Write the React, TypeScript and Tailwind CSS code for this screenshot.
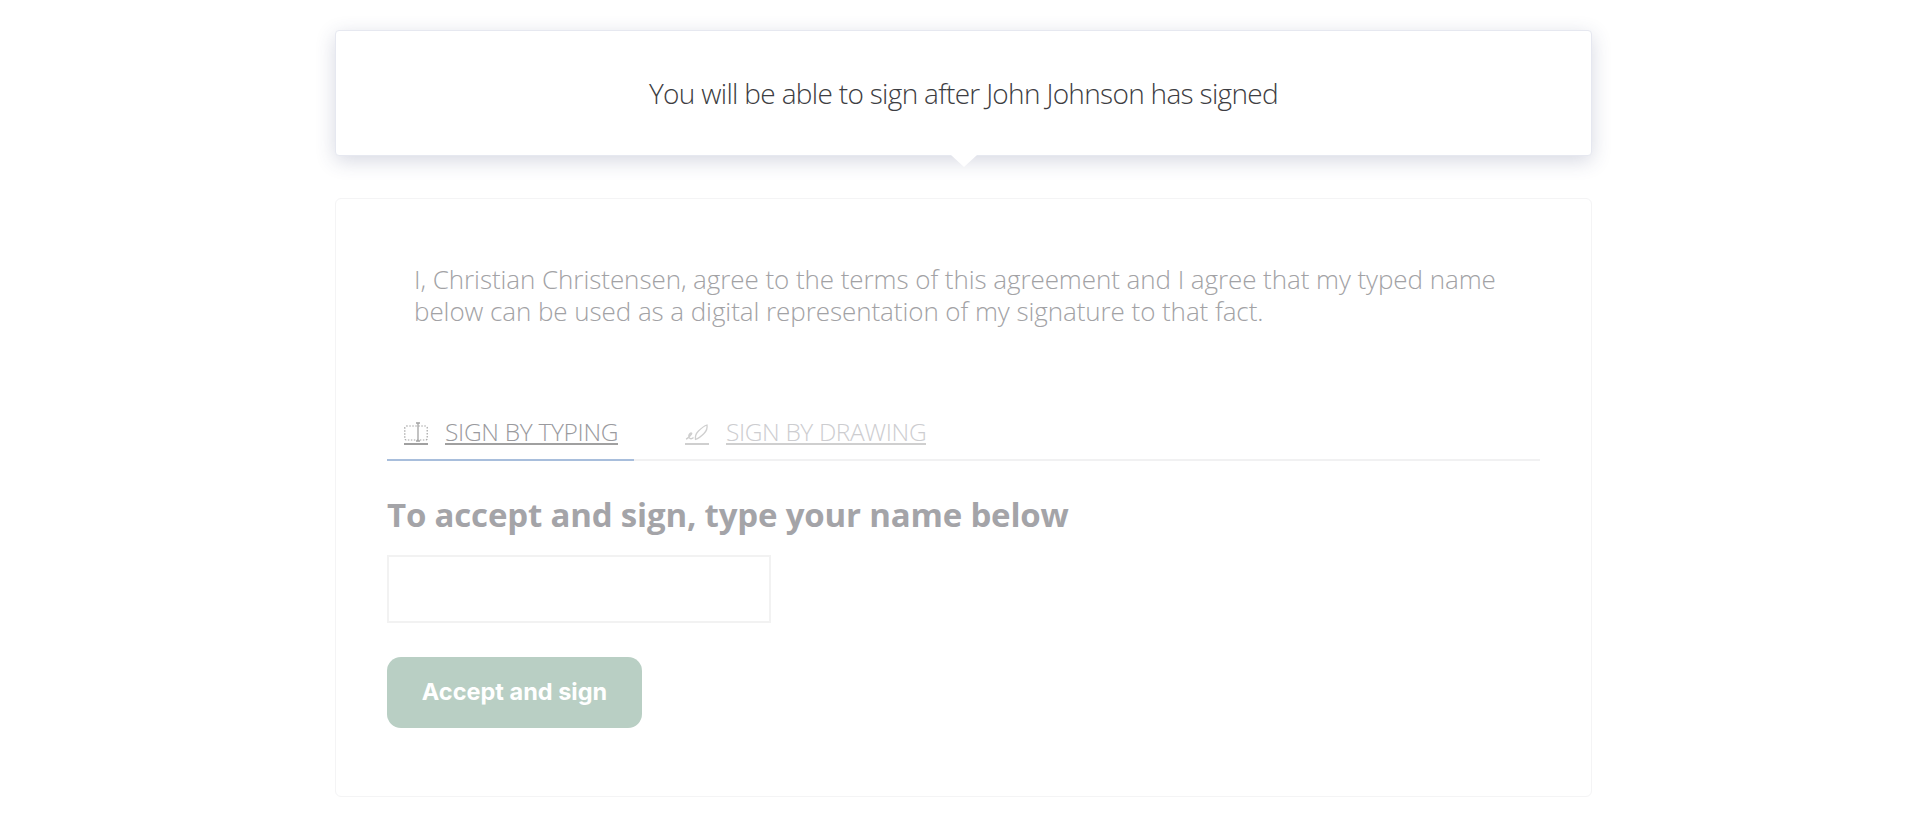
import React from "react";

function TypeIcon() {
  return (
    <svg width="24" height="22" viewBox="0 0 24 22" fill="none" stroke="#a3a3a3" className="block">
      <rect x="0.8" y="5" width="22.400" height="14" rx="1.5" strokeWidth="1.2" strokeDasharray="1.5 1.5" />
      <path d="M14 2.500v17M12 2h4M12 20h4" strokeWidth="1.3" />
    </svg>
  );
}

function DrawIcon() {
  return (
    <svg width="24" height="22" viewBox="0 0 24 22" fill="none" stroke="#cfcfcf" strokeWidth="1.3" className="block">
      <path d="M1 18c2-.5 4-3 5.500-5 .8-1-.5-1.500-1.500-.5s-1.500 3-.5 4.500c1 1 2.500 1 4-.5" />
      <path d="M10.500 18.500c-.5-3 .5-6 3-8.500s5.500-5 8.500-6c.5 3-1 6.500-3 8.500s-5.500 5-8.500 6z" />
    </svg>
  );
}

export default function App() {
  return (
    <div className="min-h-[816px] bg-white pl-[11px] font-['Open_Sans',sans-serif]">
      <div className="mx-auto w-[1257px] pt-[30px]">
        {/* notice */}
        <div className="relative flex h-[126px] items-center justify-center rounded-[4px] border border-[#e6e8f0] bg-white pb-[1px] shadow-[0_5px_20px_rgba(50,60,110,0.2)]">
          <p className="text-[28px] font-light tracking-[-0.68px] text-[#3d3d42]">
            You will be able to sign after John Johnson has signed
          </p>
          <div className="absolute top-full left-1/2 h-0 w-0 -translate-x-1/2 border-x-[13px] border-t-[12px] border-x-transparent border-t-white" />
        </div>

        {/* sign form */}
        <div className="mt-[42px] h-[599px] rounded-[6px] border border-[#f4f4f5] bg-white px-[51px] pt-[64px]">
          <p className="px-[27px] text-[26px] leading-[32px] font-light tracking-[-0.07px] text-[#a2a2a5]">
            I, Christian Christensen, agree to the terms of this agreement and I agree that my typed name below can be used as a digital representation of my signature to that fact.
          </p>

          <div className="mt-[78px] flex h-[56px] items-stretch border-b-2 border-[#f1f1f2]">
            <div className="mb-[-2px] flex w-[247px] items-end gap-[17px] border-b-2 border-[#a8bedc] pb-[14px] pl-[17px]">
              <span className="border-b-2 border-[#a0a0a0]"><TypeIcon /></span>
              <span className="border-b-2 border-[#a0a0a0] text-[24.5px] leading-[22px] font-light tracking-[-0.32px] text-[#9a9a9e]">SIGN BY TYPING</span>
            </div>
            <div className="flex items-end gap-[17px] pb-[14px] pl-[51px]">
              <span className="border-b-2 border-[#cfcfcf]"><DrawIcon /></span>
              <span className="border-b-2 border-[#cfcfcf] text-[24.5px] leading-[22px] font-light tracking-[-0.38px] text-[#cdcdd0]">SIGN BY DRAWING</span>
            </div>
          </div>

          <h2 className="mt-[32px] text-[33px] leading-[44px] font-bold tracking-[-0.18px] text-[#a4a4a8]">To accept and sign, type your name below</h2>

          <input className="mt-[18px] block h-[68px] w-[384px] border-2 border-[#f2f2f2] bg-white" />

          <button className="mt-[34px] flex h-[71px] w-[255px] items-center justify-center rounded-[14px] bg-[#b9cfc4] pb-[2px] font-['Inter',sans-serif] text-[23.5px] font-bold text-white">
            Accept and sign
          </button>
        </div>
      </div>
    </div>
  );
}
